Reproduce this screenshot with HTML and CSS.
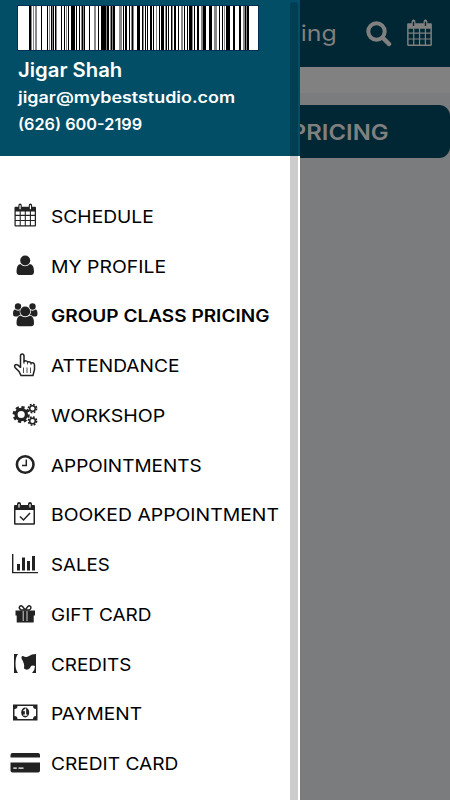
FILE: index.html
```html
<!DOCTYPE html>
<html>
  <head>
    <meta charset="utf-8">
    <meta name="viewport" content="width=device-width, initial-scale=1">
    <title>Group Class Pricing</title>
    <link rel="stylesheet" href="styles.css">
  </head>
  <body>
    <!-- Icons -->
    <svg class="sprite" width="0" height="0">
      <symbol id="calendar" viewBox="0 0 24 26" preserveAspectRatio="none">
        <path fill="currentColor" fill-rule="evenodd" d="M2 4H5V2.500Q5 0.500 6.700 0.500T8.400 2.500V4H15.600V2.500Q15.600 0.500 17.300 0.500T19 2.500V4H22Q23 4 23 5V24Q23 25 22 25H2Q1 25 1 24V5Q1 4 2 4ZM6.100 2.500V6.500H7.300V2.500ZM16.700 2.500V6.500H17.900V2.500ZM2.300 9V12.600H6.300V9ZM7.400 9V12.600H11.500V9ZM12.600 9V12.600H16.700V9ZM17.800 9V12.600H21.700V9ZM2.300 13.700V18H6.300V13.700ZM7.400 13.700V18H11.500V13.700ZM12.600 13.700V18H16.700V13.700ZM17.800 13.700V18H21.700V13.700ZM2.300 19.100V23.700H6.300V19.100ZM7.400 19.100V23.700H11.500V19.100ZM12.600 19.100V23.700H16.700V19.100ZM17.800 19.100V23.700H21.700V19.100Z"/>
      </symbol>
    </svg>

    <div class="app">
      <!-- Page -->
      <div class="page">
        <header class="topbar">
          <h1 class="topbar-title">Group Class Pricing</h1>
          <svg class="icon-search" viewBox="0 0 26 26"><circle cx="10.500" cy="10.500" r="8.200" fill="none" stroke="currentColor" stroke-width="4"/><path d="M17 17L23 23" stroke="currentColor" stroke-width="4.500" stroke-linecap="round"/></svg>
          <svg class="icon-calendar"><use href="#calendar" width="27" height="28"/></svg>
        </header>
        <div class="subbar"></div>
        <div class="page-button"><span>GROUP CLASS PRICING</span></div>
      </div>

      <!-- Side menu -->
      <aside class="drawer">
        <div class="account">
          <svg class="barcode" viewBox="0 0 240 44" shape-rendering="crispEdges">
            <path fill="#fff" d="M0 0H240V44H0Z"/>
            <path class="bars-grey" d="M13 22h1M15 22h1M17 22h2M31 22h1M34 22h1M38 22h1M48 22h1M63 22h1M65 22h1M76 22h2M88 22h1M92 22h1M94 22h1M101 22h3M113 22h1M115 22h1M125 22h1M138 22h1M147 22h1M154 22h1M163 22h2M174 22h1M183 22h2M196 22h3M206 22h1M225 22h2M228 22h1"/>
            <path class="bars" d="M11 22h2M23 22h1M29 22h1M33 22h1M35 22h1M37 22h1M43 22h1M46 22h1M50 22h1M53 22h4M58 22h1M61 22h1M64 22h1M66 22h1M71 22h1M80 22h1M83 22h5M89 22h2M93 22h1M95 22h2M105 22h1M107 22h2M111 22h1M114 22h1M119 22h3M124 22h1M127 22h1M129 22h1M132 22h2M135 22h1M141 22h1M143 22h3M148 22h1M150 22h1M153 22h1M156 22h2M160 22h1M166 22h1M169 22h1M171 22h3M176 22h1M179 22h2M185 22h3M191 22h3M201 22h1M204 22h1M208 22h4M215 22h2M221 22h2M227 22h1M229 22h2"/>
          </svg>
          <div class="name">Jigar Shah</div>
          <div class="mail">jigar@mybeststudio.com</div>
          <div class="phone">(626) 600-2199</div>
        </div>

        <nav class="menu">
          <a class="item"><svg viewBox="0 0 30 30"><use href="#calendar" x="3.500" y="1" width="23.500" height="24.500"/></svg><span class="schedule">SCHEDULE</span></a>
          <a class="item"><svg viewBox="0 0 30 30"><circle cx="15.200" cy="8.500" r="5"/><path d="M10.300 12Q15 16.500 20 12Q24 12.500 24 19.500Q24 23 21 23H9.500Q6.500 23 6.500 19.500Q6.500 12.500 10.300 12Z"/></svg><span class="profile">MY PROFILE</span></a>
          <a class="item active"><svg viewBox="0 0 30 30"><circle cx="8" cy="5.500" r="3.200"/><circle cx="22.500" cy="5.500" r="3.200"/><path d="M5 8.500Q7.500 10.500 10 9Q9.500 12 11 14Q9 14 8 15.500H5Q3 15.500 3 13Q3 8.500 5 8.500ZM25.500 8.500Q23 10.500 20.500 9Q21 12 19.500 14Q21.500 14 22.500 15.500H25.500Q27.500 15.500 27.500 13Q27.500 8.500 25.500 8.500Z"/><g class="front"><circle cx="15.200" cy="10.500" r="5"/><path d="M10.500 14.500Q15 18 20 14.500Q24 15 24 22Q24 25.200 21 25.200H9.500Q6.500 25.200 6.500 22Q6.500 15 10.500 14.500Z"/></g></svg><span class="pricing">GROUP CLASS PRICING</span></a>
          <a class="item"><svg viewBox="0 0 30 30"><path class="line" d="M10.500 17V5Q10.500 3 12.200 3T14 5V10.500Q16.500 9 17.500 11Q20 10 21 12Q24.500 11 24.500 14.500V18.500L23 24.500H11L9 20.500L5 16.500Q4 14.500 5.500 13.700Q7.500 13 10.500 16.500"/><path class="thin" d="M14 10V13M17.500 10.500V13.500M21 11.500V14M13.500 16.500V22M17 16.500V22M20.500 16.500V22"/></svg><span class="attendance">ATTENDANCE</span></a>
          <a class="item"><svg viewBox="0 0 30 30"><circle class="ring" cx="11.200" cy="13.500" r="5.200"/><circle class="teeth" cx="11.200" cy="13.500" r="7.400"/><circle class="small-ring" cx="22.500" cy="7.500" r="2.800"/><circle class="small-teeth" cx="22.500" cy="7.500" r="4.100"/><circle class="small-ring" cx="22.500" cy="20" r="2.800"/><circle class="small-teeth" cx="22.500" cy="20" r="4.100"/></svg><span class="workshop">WORKSHOP</span></a>
          <a class="item"><svg viewBox="0 0 30 30"><circle class="clock" cx="15.200" cy="13.500" r="8.300"/><path class="hand" d="M16.300 8.500V14.500H12"/></svg><span class="appointments">APPOINTMENTS</span></a>
          <a class="item"><svg viewBox="0 0 30 30"><path fill-rule="evenodd" d="M5 5H7V4Q7 2 9 2T11 4V5H18V4Q18 2 20 2T22 4V5H24Q25 5 25 6V23.700Q25 24.700 24 24.700H5Q4 24.700 4 23.700V6Q4 5 5 5ZM5.500 10V23.200H23.500V10ZM8.400 4V7.500H9.600V4ZM19.400 4V7.500H20.600V4Z"/><path class="check" d="M10 16.500L13.500 20L20 13"/></svg><span class="booked">BOOKED APPOINTMENT</span></a>
          <a class="item"><svg viewBox="0 0 30 30"><path d="M2 4H3.400V22H28V23.300H2ZM7 14H10V20.500H7ZM12 7.500H15V20.500H12ZM17 11H20V20.500H17ZM22 6H25V20.500H22Z"/></svg><span class="sales">SALES</span></a>
          <a class="item"><svg viewBox="0 0 30 30"><path d="M5.500 10.500H25V15.500H23.700V22.500H6.700V15.500H5.500Z"/><path class="ribbon" d="M13.200 11V21M17 11V21"/><path class="bow" d="M15.200 10L12.500 6.500Q11 5 9.700 6.500T11 10H19.400Q21.800 8 20.500 6.500T17.800 6.500L15.200 10"/></svg><span class="gift">GIFT CARD</span></a>
          <a class="item"><svg viewBox="0 0 30 30"><path d="M4 4H8Q5.500 7 5.500 13.500T8 23H4ZM11.500 8.500Q11 5.500 13 6Q16 8 19 6Q21.500 4 26 4V23H22Q25 20 25 16Q21 14.500 20 18Q17 21 14 18.500Q15 14 11.500 8.500Z"/></svg><span class="credits">CREDITS</span></a>
          <a class="item"><svg viewBox="0 0 30 30"><path fill-rule="evenodd" d="M3 5.500H27.500V21.500H3ZM7.500 7Q7.500 10 4.500 10V17Q7.500 17 7.500 20H23Q23 17 26 17V10Q23 10 23 7Z"/><ellipse cx="15.200" cy="13.500" rx="4" ry="5"/><path class="one" d="M13.500 12L15.500 10.300V16M13.300 16.200H17.300"/></svg><span class="payment">PAYMENT</span></a>
          <a class="item"><svg viewBox="0 0 30 30"><path fill-rule="evenodd" d="M.5 6Q.5 4 2.500 4H28Q30 4 30 6V8.500H.5ZM.5 13.500H30V21.500Q30 23.500 28 23.500H2.500Q.5 23.500 .5 21.500ZM3.300 18.500V19.700H6.800V18.500ZM8.500 18.500V19.700H13.500V18.500Z"/></svg><span class="card">CREDIT CARD</span></a>
        </nav>
        <div class="scrollbar"></div>
      </aside>
    </div>
  </body>
</html>
```

FILE: styles.css
```css
*{box-sizing:border-box}
body{margin:0;font-family:Inter,"Liberation Sans",sans-serif}
.sprite{position:absolute}
.app{position:relative;height:800px;overflow:hidden;background:#7b7c7e}
.topbar{display:flex;align-items:center;height:67px;background:#002733;color:#808080}
.topbar-title{margin:0 0 2px auto;font-size:22px;font-weight:400;white-space:nowrap;transform:scaleX(1.13);transform-origin:right}
.icon-search{width:26px;height:26px;margin-left:29px}
.icon-calendar{width:27px;height:28px;margin:0 17px 2px 14px}
.subbar{height:26px;background:#818181}
.page-button{display:flex;align-items:center;justify-content:flex-end;height:53px;margin-top:11.5px;padding:1px 61px 0 0;border-radius:11px;background:#002733;color:#808080;font-size:21.5px;font-weight:600}
.page-button span{transform:scaleX(1.11);transform-origin:right}
.drawer{position:absolute;top:0;left:0;width:300px;height:800px;background:#fff}
.account{height:156px;padding:6px 18px;background:#024e66;color:#fff;font-weight:600}
.barcode{display:block;width:240px;height:44px;outline:1px solid #013054}
.bars,.bars-grey{stroke:#000;stroke-width:44}
.bars-grey{stroke:#888}
.name,.mail,.phone{width:max-content;transform-origin:left}
.name{margin-top:6px;font-size:19.5px;line-height:28px;transform:scaleX(1.04)}
.mail,.phone{font-size:15.5px;line-height:27px}
.mail{transform:scaleX(1.155)}
.phone{transform:scaleX(1.05)}
.menu{display:flex;flex-direction:column;padding:35px 0 0 10px}
.item{display:flex;align-items:center;height:49.75px;color:#000;font-size:17px;white-space:nowrap}
.item svg{flex:none;width:30px;height:30px;margin:2px 10.5px 0 0;fill:#222;color:#222}
.item span{padding-top:2px;transform-origin:left}
.active{font-weight:600}
.item .front{stroke:#fff;stroke-width:1.2;paint-order:stroke}
/* label widths */
.schedule{transform:scaleX(1.13)}
.profile{transform:scaleX(1.14)}
.pricing{transform:scaleX(1.12)}
.attendance{transform:scaleX(1.125)}
.workshop{transform:scaleX(1.15)}
.appointments{transform:scaleX(1.115)}
.booked{transform:scaleX(1.14)}
.sales{transform:scaleX(1.1)}
.gift{transform:scaleX(1.115)}
.credits{transform:scaleX(1.11)}
.payment{transform:scaleX(1.125)}
.card{transform:scaleX(1.125)}
.line,.thin,.ring,.teeth,.small-ring,.small-teeth,.clock,.hand,.check,.ribbon,.bow,.one{fill:none;stroke:#222}
.line{stroke-width:1.5}
.thin{stroke-width:.8}
.ring{stroke-width:3.2}
.teeth{stroke-width:2.4;stroke-dasharray:3.2 2.611}
.small-ring{stroke-width:1.5}
.small-teeth{stroke-width:1.6;stroke-dasharray:1.8 1.42}
.clock{stroke-width:2.6}
.hand,.check,.bow{stroke-width:1.5}
.ribbon{stroke:#fff;stroke-width:.8}
.one{stroke:#fff;stroke-width:1.3}
.scrollbar{position:absolute;top:2px;right:2px;width:8px;height:900px;border-radius:4px;background:rgba(0,0,0,.2)}
```
